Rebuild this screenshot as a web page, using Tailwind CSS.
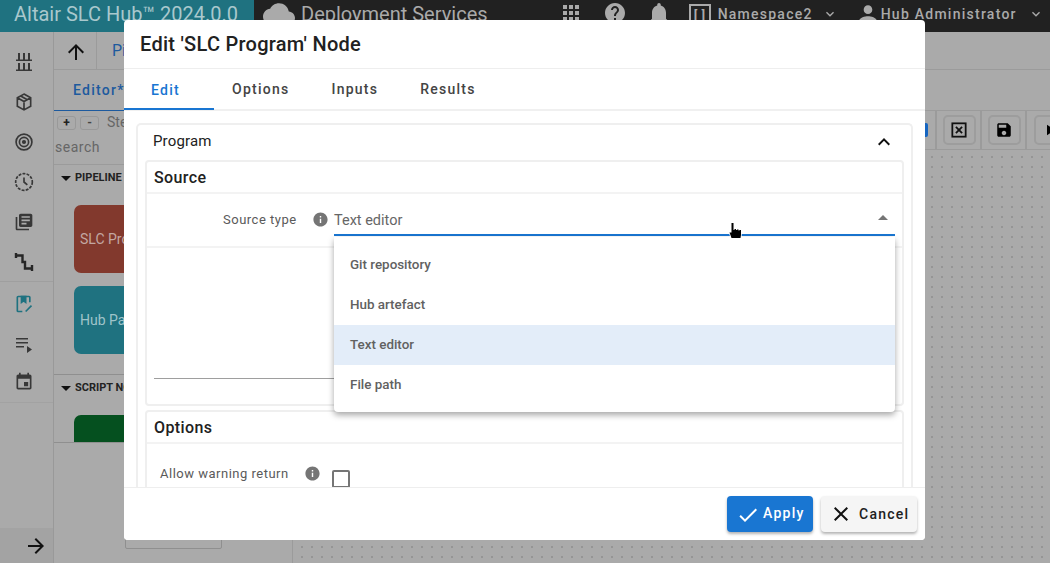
<!DOCTYPE html>
<html>
<head>
<meta charset="utf-8">
<script src="https://cdn.jsdelivr.net/npm/@tailwindcss/browser@4"></script>
</head>
<body class="font-['Roboto',sans-serif] overflow-hidden">
<div class="relative w-[1050px] h-[563px] overflow-hidden bg-[#aaaaaa] flex flex-col">
  <!-- header -->
  <header class="h-[32px] shrink-0 flex bg-[#212121] text-[#aaaaaa]">
    <div class="w-[254px] bg-[#1f7280] pl-[14px] text-[20px] leading-[28px] text-[#a9c8cd] whitespace-nowrap">Altair SLC Hub™ 2024.0.0</div>
    <div class="flex items-center flex-1 pb-[4px]">
      <svg class="ml-[9px] w-[32px] h-[32px]" viewBox="0 0 24 24" fill="#aaaaaa"><path d="M19.35 10.04C18.67 6.59 15.64 4 12 4 9.11 4 6.6 5.64 5.35 8.04 2.34 8.36 0 10.91 0 14c0 3.31 2.69 6 6 6h13c2.76 0 5-2.24 5-5 0-2.64-2.05-4.78-4.65-4.96z"/></svg>
      <span class="ml-[6px] text-[20px] leading-[28px] self-start whitespace-nowrap">Deployment Services</span>
      <svg class="ml-[71px] w-[24px] h-[24px] shrink-0 -mt-[3px]" viewBox="0 0 24 24" fill="#aaaaaa"><path d="M4 8h4V4H4v4zm6 12h4v-4h-4v4zm-6 0h4v-4H4v4zm0-6h4v-4H4v4zm6 0h4v-4h-4v4zm6-10v4h4V4h-4zm-6 4h4V4h-4v4zm6 6h4v-4h-4v4zm0 6h4v-4h-4v4z"/></svg>
      <svg class="ml-[20px] w-[24px] h-[24px] shrink-0 -mt-[3px]" viewBox="0 0 24 24" fill="#aaaaaa"><path d="M12 2C6.48 2 2 6.48 2 12s4.48 10 10 10 10-4.48 10-10S17.52 2 12 2zm1 17h-2v-2h2v2zm2.07-7.75l-.9.92C13.45 12.9 13 13.5 13 15h-2v-.5c0-1.1.45-2.1 1.17-2.83l1.24-1.26c.37-.36.59-.86.59-1.41 0-1.1-.9-2-2-2s-2 .9-2 2H8c0-2.21 1.79-4 4-4s4 1.79 4 4c0 .88-.36 1.68-.93 2.25z"/></svg>
      <svg class="ml-[18px] w-[28px] h-[28px] shrink-0" viewBox="0 0 24 24" fill="#aaaaaa"><path d="M12 22c1.1 0 2-.9 2-2h-4c0 1.1.89 2 2 2zm6-6v-5c0-3.07-1.64-5.64-4.5-6.32V4c0-.83-.67-1.5-1.5-1.5s-1.5.67-1.5 1.5v.68C7.63 5.36 6 7.92 6 11v5l-2 2v1h16v-1l-2-2z"/></svg>
      <div class="ml-[16px] mt-[2px] w-[22px] h-[22px] border-2 border-[#aaaaaa] shrink-0 flex items-start pt-[3px] justify-center text-[13px] font-bold leading-[14px] tracking-[0.5px]">[ ]</div>
      <span class="ml-[7px] text-[14px] font-medium tracking-[1.25px] whitespace-nowrap">Namespace2</span>
      <svg class="ml-[9px] w-[16px] h-[16px] shrink-0" viewBox="0 0 24 24" fill="#aaaaaa"><path d="M16.59 8.59L12 13.17 7.41 8.59 6 10l6 6 6-6z"/></svg>
      <svg class="ml-[17px] w-[26px] h-[26px] shrink-0" viewBox="0 0 24 24" fill="#aaaaaa"><path d="M12 12c2.21 0 4-1.79 4-4s-1.79-4-4-4-4 1.79-4 4 1.79 4 4 4zm0 2c-2.67 0-8 1.34-8 4v2h16v-2c0-2.66-5.33-4-8-4z"/></svg>
      <span class="text-[14px] font-medium tracking-[1.25px] whitespace-nowrap">Hub Administrator</span>
      <svg class="ml-[11px] w-[16px] h-[16px] shrink-0" viewBox="0 0 24 24" fill="#aaaaaa"><path d="M16.59 8.59L12 13.17 7.41 8.59 6 10l6 6 6-6z"/></svg>
    </div>
  </header>

  <div class="flex flex-1 min-h-0">
    <!-- sidebar -->
    <aside class="w-[54px] shrink-0 border-r border-[#999999] flex flex-col text-[#212121]">
      <div class="flex flex-col items-center gap-[20px] pt-[20px] pr-[6px] border-b border-[#9f9f9f] h-[250px]">
        <svg class="w-[20px] h-[20px]" viewBox="0 0 20 20" fill="#383838"><path d="M4 1h2v6.500H4zM9 1h2v6.500H9zM14 1h2v6.500h-2zM2 7.500h16V9H2zM4 11h2v6.500H4zM9 11h2v6.500H9zM14 11h2v6.500h-2zM2 17.500h16V19H2z"/></svg>
        <svg class="w-[20px] h-[20px]" viewBox="0 0 24 24" fill="none" stroke="#383838" stroke-width="2"><path d="M12 2.500l8 4.500v10l-8 4.500L4 17V7zM4 7l8 4.500L20 7M12 11.500v10M8 4.800l8 4.500"/></svg>
        <svg class="w-[20px] h-[20px]" viewBox="0 0 24 24" fill="none" stroke="#383838" stroke-width="2"><circle cx="12" cy="12" r="9.500"/><circle cx="12" cy="12" r="5.500"/><circle cx="12" cy="12" r="1.500" fill="#383838"/></svg>
        <svg class="w-[20px] h-[20px]" viewBox="0 0 24 24" fill="none" stroke="#383838" stroke-width="2"><circle cx="12" cy="12" r="10" stroke-dasharray="3.500 1.500"/><path d="M12 6.500V12l4 3.500"/></svg>
        <svg class="w-[20px] h-[20px]" viewBox="0 0 24 24" fill="#383838"><path d="M4 6H2v14c0 1.1.9 2 2 2h14v-2H4V6zm16-4H8c-1.1 0-2 .9-2 2v12c0 1.1.9 2 2 2h12c1.1 0 2-.9 2-2V4c0-1.1-.9-2-2-2zm-1 9H9V9h10v2zm-4 4H9v-2h6v2zm4-8H9V5h10v2z"/></svg>
        <svg class="w-[20px] h-[20px]" viewBox="0 0 20 20" fill="none" stroke="#262626" stroke-width="2.400"><path d="M2 1v5M2 3.500h6.500V10H11v6.500h7M18 13v6"/></svg>
      </div>
      <div class="flex flex-col items-center gap-[20px] pt-[12px] pr-[6px] h-[121px] border-b border-[#a2a2a2]">
        <svg class="w-[20px] h-[20px]" viewBox="0 0 24 24" fill="none" stroke="#1f7280" stroke-width="2"><path d="M19 10V4a1 1 0 0 0-1-1H5a1 1 0 0 0-1 1v16a1 1 0 0 0 1 1h5M14 21l7-7"/><path d="M9 3v7l2.500-1.800L14 10V3z" fill="#1f7280"/></svg>
        <svg class="w-[20px] h-[20px]" viewBox="0 0 20 20" fill="#383838"><path d="M2 4h12v1.600H2zM2 8h12v1.600H2zM2 12h8v1.600H2zM13 12l5 3.500-5 3.500z"/></svg>
        <svg class="w-[20px] h-[20px] -mt-[2px]" viewBox="0 0 24 24" fill="#383838"><path d="M17 12h-5v5h5v-5zM16 1v2H8V1H6v2H5c-1.110 0-1.990.9-1.990 2L3 19c0 1.100.89 2 2 2h14c1.100 0 2-.9 2-2V5c0-1.100-.9-2-2-2h-1V1h-2zm3 18H5V8h14v11z"/></svg>
      </div>
      <div class="mt-auto h-[35px] bg-[#a3a3a3] flex items-center justify-end pr-[5px]">
        <svg class="w-[24px] h-[24px]" viewBox="0 0 24 24" fill="#111111"><path d="M12 4l-1.410 1.410L16.170 11H4v2h12.170l-5.580 5.590L12 20l8-8z"/></svg>
      </div>
    </aside>

    <!-- left panel -->
    <section class="w-[239px] shrink-0 border-r border-[#9b9b9b] flex flex-col">
      <div class="h-[38px] border-b border-[#9b9b9b] flex items-center">
        <div class="w-[43px] h-full border-r border-[#9b9b9b] flex items-center justify-center pl-[2px] pt-[2px]">
          <svg class="w-[24px] h-[24px]" viewBox="0 0 24 24" fill="#111111"><path d="M4 12l1.410 1.410L11 7.830V20h2V7.830l5.580 5.590L20 12l-8-8-8 8z"/></svg>
        </div>
        <span class="ml-[15px] text-[16px] text-[#1d5a9e]">Pi</span>
      </div>
      <div class="h-[40px] flex items-center">
        <span class="ml-[19px] text-[14px] font-medium tracking-[1.25px] text-[#1d5a9e]">Editor*</span>
      </div>
      <div class="h-[1px] w-[70px] bg-[#1d5a9e]"></div>
      <div class="flex items-center gap-[4px] pl-[3px] pt-[2px] h-[21px]">
        <div class="w-[19px] h-[14px] border border-[#999999] rounded-[3px] flex items-center justify-center text-[12px] font-bold text-[#222222] leading-none">+</div>
        <div class="w-[19px] h-[14px] border border-[#999999] rounded-[3px] flex items-center justify-center text-[12px] font-bold text-[#444444] leading-none">-</div>
        <span class="ml-[4px] text-[14px] text-[#666666]">Ste</span>
      </div>
      <div class="h-[33px] pl-[1px] text-[14px] leading-[31px] text-[#666666] tracking-[0.5px] border-b border-[#9b9b9b]">search</div>
      <div class="h-[26px] flex items-center pl-[7px] gap-[4px] text-[#222222] text-[11px] font-bold whitespace-nowrap">
        <span class="w-0 h-0 border-x-[5px] border-x-transparent border-t-[5px] border-t-[#111111]"></span>PIPELINE NODES
      </div>
      <div class="pl-[20px] flex flex-col gap-[13px] pt-[14px] pb-[20px] border-b border-[#8f8f8f]">
        <div class="h-[68px] w-[140px] rounded-[7px] bg-[#82392d] text-[#c2a7a2] text-[14px] flex items-center pl-[6px]">SLC Program</div>
        <div class="h-[68px] w-[140px] rounded-[7px] bg-[#1f7280] text-[#9fc4ca] text-[14px] flex items-center pl-[6px]">Hub Package</div>
      </div>
      <div class="h-[26px] flex items-center pl-[7px] gap-[4px] text-[#222222] text-[11px] font-bold whitespace-nowrap">
        <span class="w-0 h-0 border-x-[5px] border-x-transparent border-t-[5px] border-t-[#111111]"></span>SCRIPT NODES
      </div>
      <div class="pl-[20px] h-[42px] pt-[14px] border-b border-[#8f8f8f] overflow-hidden">
        <div class="h-[68px] w-[140px] rounded-[7px] bg-[#05501f]"></div>
      </div>
      <div class="ml-[71px] mt-[85px] w-[97px] h-[21px] border border-[#8f8f8f] rounded-[2px]"></div>
    </section>

    <!-- canvas area -->
    <section class="flex-1 flex flex-col min-w-0">
      <div class="h-[38px] border-b border-[#9b9b9b]"></div>
      <div class="h-[41px] border-b border-[#9b9b9b]"></div>
      <div class="h-[39px] shrink-0 flex items-stretch justify-end border-b border-[#9b9b9b] overflow-hidden">
        <div class="flex items-stretch -mr-[22px] shrink-0">
          <div class="w-[45px] border-r-2 border-[#9b9b9b] flex items-center justify-end pr-[7px]"><div class="w-[12px] h-[14px] bg-[#1565c0] rounded-[2px]"></div></div>
          <div class="w-[45px] border-r-2 border-[#9b9b9b] flex items-center justify-center pl-[1px]">
            <div class="w-[33px] h-[30px] border-2 border-[#9d9d9d] rounded-[5px] flex items-center justify-center">
              <svg class="w-[16px] h-[16px]" viewBox="0 0 18 18" fill="none" stroke="#111111" stroke-width="2"><rect x="1.500" y="1.500" width="15" height="15"/><path d="M5.500 5.500l7 7M12.500 5.500l-7 7"/></svg>
            </div>
          </div>
          <div class="w-[45px] border-r-2 border-[#9b9b9b] flex items-center justify-center pl-[1px]">
            <div class="w-[33px] h-[30px] border-2 border-[#9d9d9d] rounded-[5px] flex items-center justify-center">
              <svg class="w-[18px] h-[18px]" viewBox="0 0 24 24" fill="#000000"><path d="M17 3H5c-1.110 0-2 .9-2 2v14c0 1.100.89 2 2 2h14c1.100 0 2-.9 2-2V7l-4-4zm-5 16c-1.660 0-3-1.340-3-3s1.340-3 3-3 3 1.340 3 3-1.340 3-3 3zm3-10H5V5h10v4z"/></svg>
            </div>
          </div>
          <div class="w-[45px] flex items-center justify-center pl-[1px]">
            <div class="w-[33px] h-[30px] border-2 border-[#9d9d9d] rounded-[5px] flex items-center justify-center">
              <svg class="w-[18px] h-[18px]" viewBox="0 0 24 24" fill="#000000"><path d="M8 5v14l11-7z"/></svg>
            </div>
          </div>
        </div>
      </div>
      <div class="flex-1 bg-[radial-gradient(#959595_1px,transparent_1px)] bg-[size:10px_10px] bg-[position:4px_2px]"></div>
    </section>
  </div>

  <!-- modal -->
  <div class="absolute left-[124px] top-[20px] w-[801px] h-[520px] bg-white rounded-[4px] flex flex-col overflow-hidden text-[#212121]">
    <div class="h-[49px] shrink-0 border-b border-[#eeeeee] pl-[16px] flex items-center text-[20px] font-medium tracking-[0.27px] leading-none">Edit 'SLC Program' Node</div>
    <div class="h-[42px] shrink-0 border-b-2 border-[#f0f0f0] flex items-center text-[14px] font-medium tracking-[1.25px]">
      <div class="w-[90px] h-[40px] pl-[27px] leading-[40px] text-[#1976d2] border-b-2 border-[#1976d2] -mb-[2px]">Edit</div>
      <span class="ml-[18px] text-[#444444]">Options</span>
      <span class="ml-[42px] text-[#444444]">Inputs</span>
      <span class="ml-[42px] text-[#444444]">Results</span>
    </div>
    <div class="flex-1 min-h-0 overflow-hidden px-[12px] pt-[12px]">
      <div class="border-2 border-b-0 border-[#efefef] rounded-[5px] pb-[20px]">
        <div class="h-[35px] flex items-center justify-between pl-[15px] pr-[15px] pb-[2px] text-[15px]">
          <span class="tracking-[0.15px]">Program</span>
          <svg class="w-[24px] h-[24px]" viewBox="0 0 24 24" fill="#111111"><path d="M12 8l-6 6 1.410 1.410L12 10.830l4.590 4.580L18 14z"/></svg>
        </div>
        <div class="mx-[7px] border-2 border-[#efefef] rounded-[4px] h-[246px] flex flex-col">
          <div class="h-[32px] shrink-0 border-b-2 border-[#f3f3f3] pl-[7px] text-[16px] font-medium tracking-[0.4px] leading-[31px]">Source</div>
          <div class="h-[54px] shrink-0 border-b-2 border-[#f3f3f3] relative">
            <span class="absolute left-[76px] top-[17px] text-[13px] tracking-[0.5px] leading-[18px] text-[#5a5a5a]">Source type</span>
            <svg class="absolute left-[165px] top-[17px] w-[17px] h-[17px]" viewBox="0 0 24 24" fill="#757575"><path d="M12 2C6.480 2 2 6.480 2 12s4.480 10 10 10 10-4.480 10-10S17.520 2 12 2zm1 15h-2v-6h2v6zm0-8h-2V7h2v2z"/></svg>
            <div class="absolute left-[187px] right-[7px] top-0 h-[42px] border-b-2 border-[#1976d2] flex items-end justify-between pb-[3px]">
              <span class="text-[14.500px] leading-[20px] text-[#666666]">Text editor</span>
              <span class="w-0 h-0 border-x-[5px] border-x-transparent border-b-[5px] border-b-[#757575] mr-[7px] mb-[11px]"></span>
            </div>
          </div>
          <div class="flex-1 flex flex-col justify-end px-[7px] pb-[25px]"><div class="h-px bg-[#9e9e9e]"></div></div>
        </div>
        <div class="mx-[7px] mt-[4px] border-2 border-[#efefef] rounded-[4px] h-[100px]">
          <div class="h-[32px] border-b-2 border-[#f3f3f3] pl-[7px] text-[16px] font-medium tracking-[0.4px] leading-[31px]">Options</div>
          <div class="relative">
            <span class="absolute left-[13px] top-[21px] text-[13px] tracking-[0.5px] leading-[18px] text-[#5a5a5a] whitespace-nowrap">Allow warning return</span>
            <svg class="absolute left-[157px] top-[21px] w-[17px] h-[17px]" viewBox="0 0 24 24" fill="#757575"><path d="M12 2C6.480 2 2 6.480 2 12s4.480 10 10 10 10-4.480 10-10S17.520 2 12 2zm1 15h-2v-6h2v6zm0-8h-2V7h2v2z"/></svg>
            <div class="absolute left-[185px] top-[26px] w-[18px] h-[18px] border-2 border-[#757575] rounded-[2px]"></div>
          </div>
        </div>
      </div>
    </div>
    <div class="h-[53px] shrink-0 border-t border-[#eeeeee] bg-white relative z-10 flex items-start justify-end gap-[8px] pt-[8px] pr-[8px]">
      <div class="w-[86px] h-[36px] bg-[#1976d2] rounded-[4px] shadow-[0_2px_3px_rgba(0,0,0,0.3)] flex items-center text-white text-[14px] font-medium tracking-[1.25px] pl-[9px] gap-[3px] pb-[2px]">
        <svg class="w-[24px] h-[24px] mt-[3px]" viewBox="0 0 24 24" fill="#ffffff"><path d="M9 16.170L4.830 12l-1.420 1.410L9 19 21 7l-1.410-1.410z"/></svg>Apply
      </div>
      <div class="w-[96px] h-[36px] bg-[#f5f5f5] rounded-[4px] shadow-[0_2px_3px_rgba(0,0,0,0.3)] flex items-center text-[#212121] text-[14px] font-medium tracking-[1.25px] pl-[8px] gap-[6px]">
        <svg class="w-[24px] h-[24px]" viewBox="0 0 24 24" fill="#111111"><path d="M19 6.410L17.590 5 12 10.590 6.410 5 5 6.410 10.590 12 5 17.590 6.410 19 12 13.410 17.590 19 19 17.590 13.410 12z"/></svg>Cancel
      </div>
    </div>
  </div>

  <!-- dropdown -->
  <div class="absolute left-[334px] top-[237px] w-[561px] h-[175px] bg-white rounded-b-[4px] shadow-[0_3px_6px_rgba(0,0,0,0.35)] py-[8px] text-[13.400px] font-medium text-[#616161] z-20">
    <div class="h-[40px] leading-[39px] pl-[16px]">Git repository</div>
    <div class="h-[40px] leading-[39px] pl-[16px]">Hub artefact</div>
    <div class="h-[40px] leading-[39px] pl-[16px] bg-[#e3edf9]">Text editor</div>
    <div class="h-[40px] leading-[39px] pl-[16px]">File path</div>
  </div>

  <!-- cursor -->
  <svg class="absolute left-[728px] top-[222px] w-[14px] h-[18px] z-30" viewBox="0 0 14 18" fill="#000000" stroke="#ffffff" stroke-width="1.500" paint-order="stroke"><path d="M3.500 1h2v7h1V7h1.500v1h1V7.500h1.500v1h1V8h1.500v5l-.5 3h-9L1.500 10.500h2z"/></svg>
</div>
</body>
</html>
